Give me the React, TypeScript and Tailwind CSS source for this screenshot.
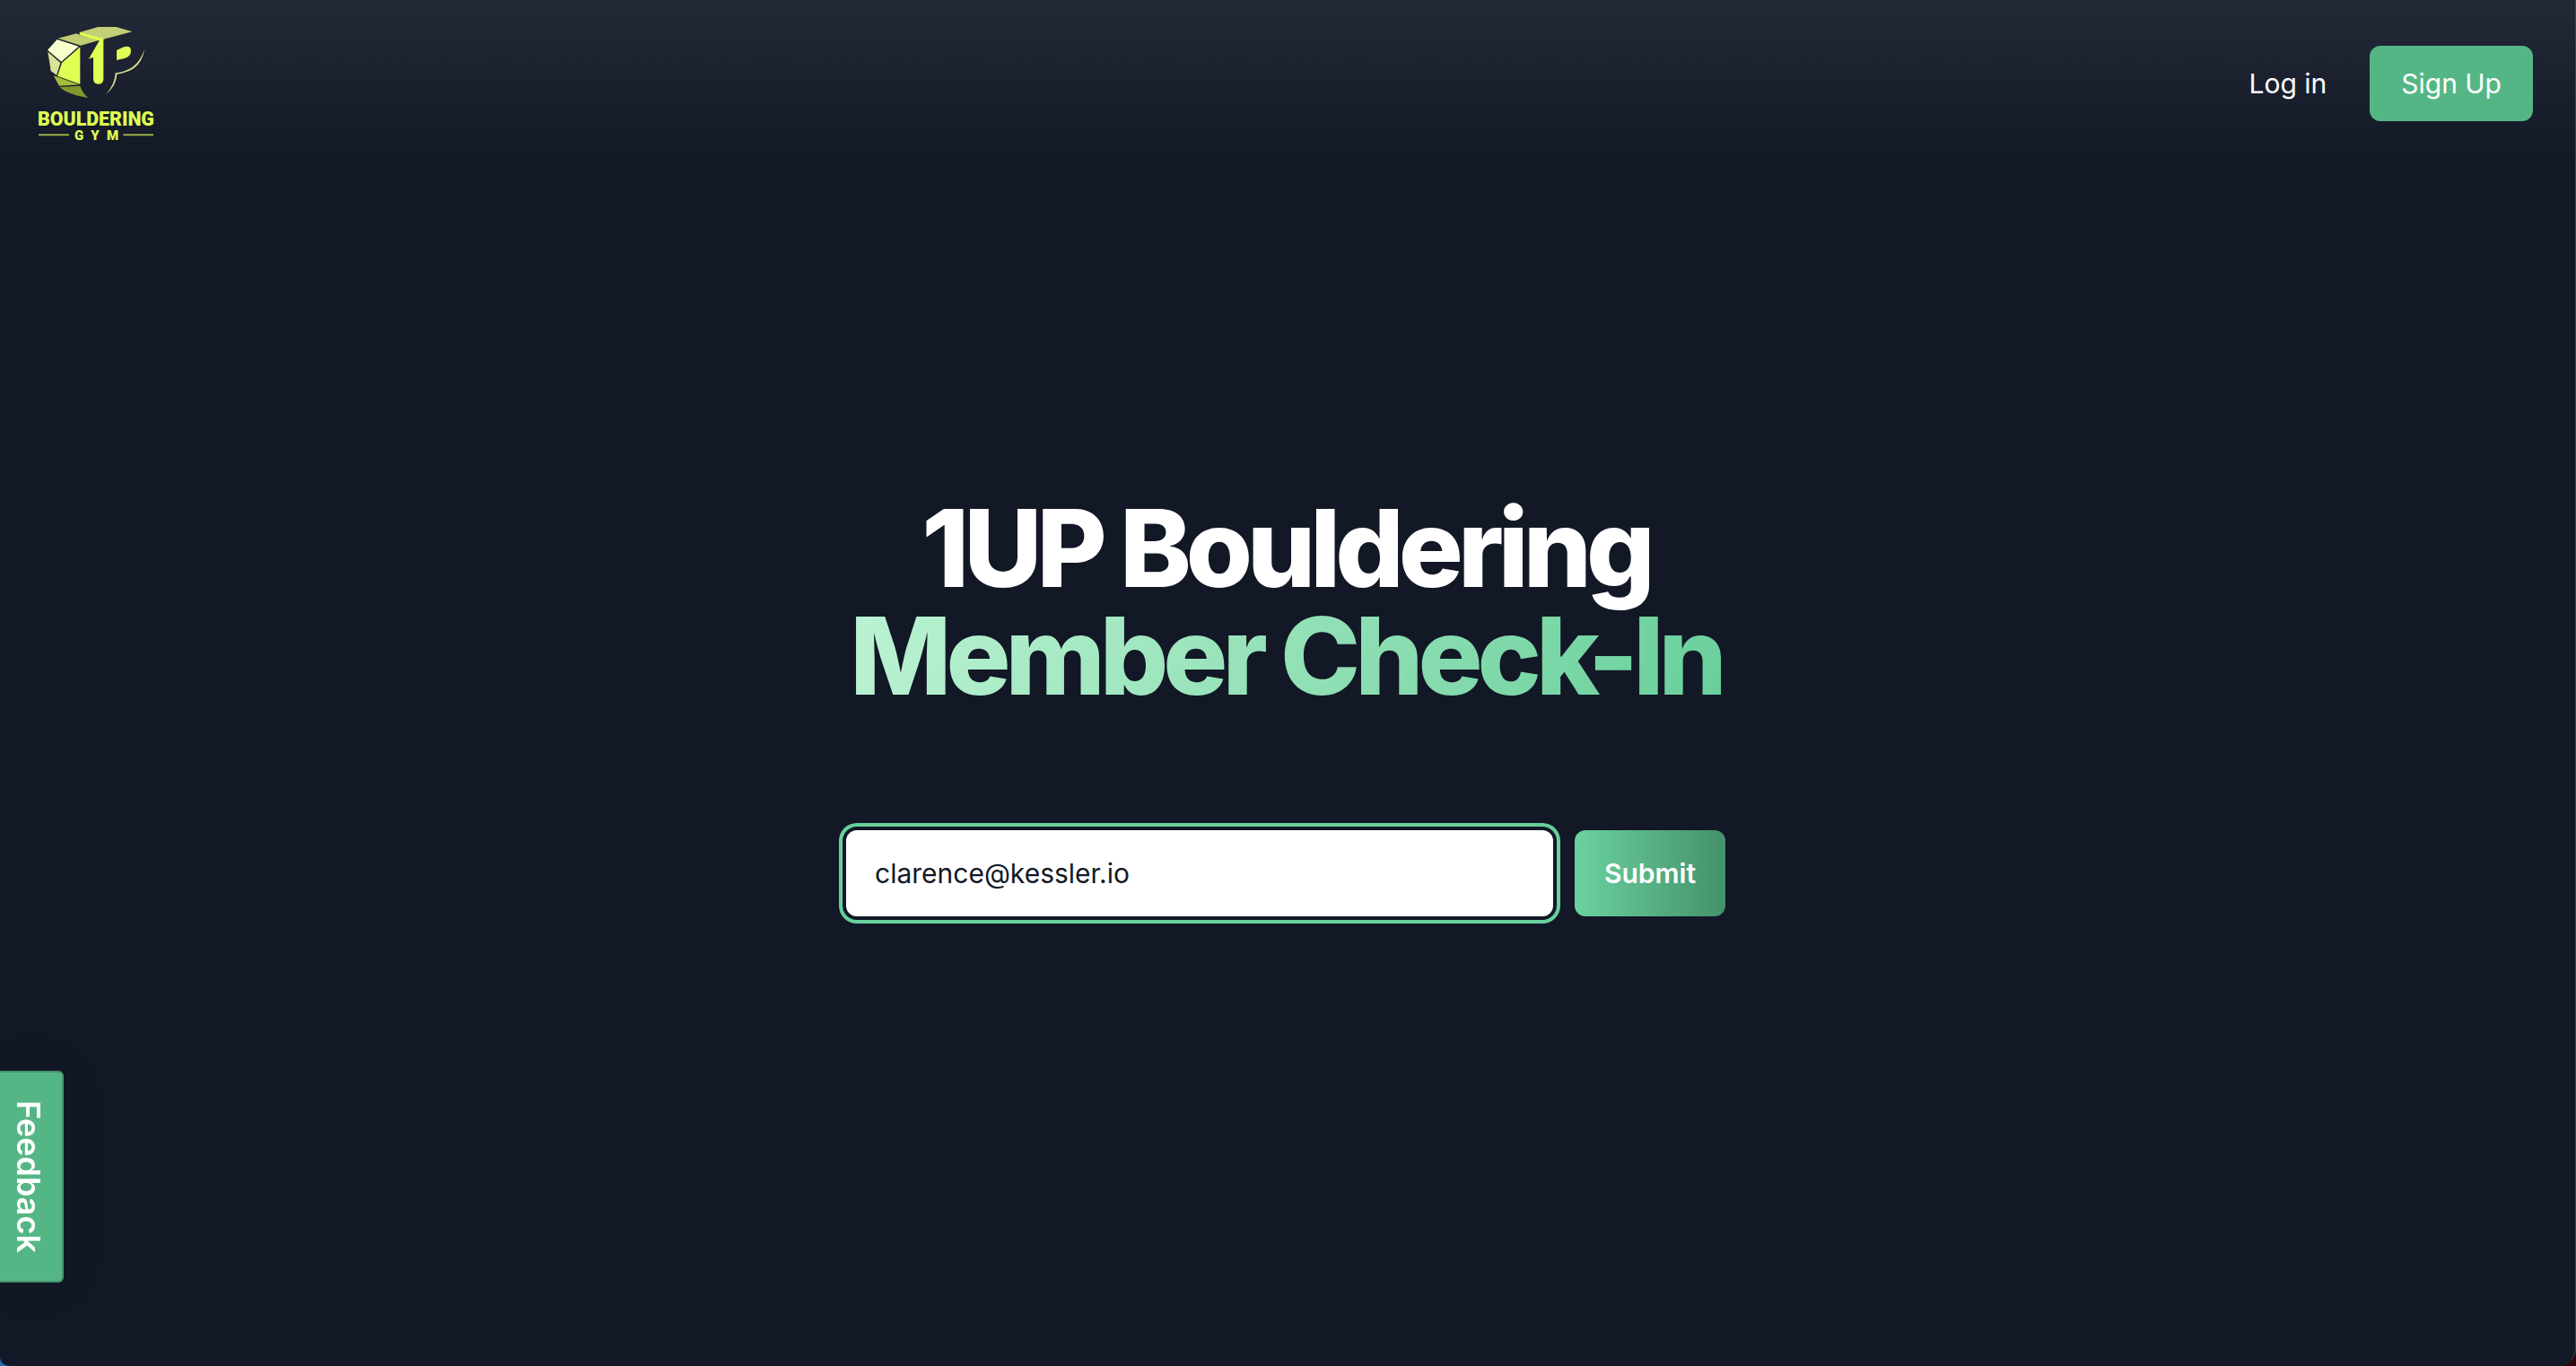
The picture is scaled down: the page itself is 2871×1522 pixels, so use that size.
import { useState } from "react";

function Logo() {
  return (
    <svg
      viewBox="69 57 384 384"
      className="size-32 overflow-visible"
      role="img"
      aria-label="1UP Bouldering Gym"
    >
      <path d="M134 98 L196 82 L208 88 L272 104 L210 122 Z" fill="#c0cd72" />
      <path d="M206 78 L268 60 H328 L382 76 L286 101 Z" fill="#c3cf77" />
      <path d="M206 77 L286 99 V104 L270 106 L206 87 Z" fill="#dfff52" />
      <path d="M131 102 L203 125 L145 176 L99 137 Z" fill="#f7ffcf" />
      <path d="M100 143 L142 180 L129 221 L110 207 Z" fill="#d8e394" />
      <path d="M208 127 V251 L132 224 L147 180 Z" fill="#dfff52" />
      <path d="M119 223 L205 253 L138 257 Z" fill="#a5bc3b" />
      <path d="M139 261 L208 257 Q216 282 235 297 Q185 289 154 272 Z" fill="#80982c" />
      <path
        d="M286 101 V234 Q286 251 269 251 Q252 251 252 234 V163 Q244 162 236 168 L272 106 Z"
        fill="#dfff52"
      />
      <path
        d="M330 138 L354 127 Q378 121 378 140 Q378 159 354 166 L330 171 Z"
        fill="#dfff52"
      />
      <path
        d="M423 134 Q418 175 387 199 Q363 214 331 218 Q329 257 294 285 Q323 254 326 214 Q360 209 383 194 Q411 173 423 134 Z"
        fill="#d2dd8f"
      />
      <g
        fill="#dfff52"
        fontFamily="Roboto, sans-serif"
        fontWeight="900"
        textAnchor="middle"
      >
        <text x="261" y="389" fontSize="64">BOULDERING</text>
        <text x="204" y="437" fontSize="45">G</text>
        <text x="258" y="437" fontSize="45">Y</text>
        <text x="317" y="437" fontSize="45">M</text>
      </g>
      <path d="M69 421 H171 M352 421 H453" stroke="#9aac45" strokeWidth="6" />
    </svg>
  );
}

export default function App() {
  const [email, setEmail] = useState("clarence@kessler.io");

  return (
    <div className="bg-linear-to-r from-[#1c6fb5] to-[#2a0508] font-['Inter',sans-serif] text-[30px] leading-[48px]">
      <div className="min-h-screen overflow-hidden rounded-br-[20px] rounded-bl-[10px] border-r border-[#3c4450] bg-[#121826]">
        <header className="flex h-[186px] items-center justify-between bg-linear-to-b from-[#232937] to-[#121826] pr-[47px] pl-[43px]">
          <a href="#home">
            <Logo />
          </a>
          <nav className="flex items-center gap-12">
            <a href="#login" className="text-white">
              Log in
            </a>
            <a
              href="#signup"
              className="rounded-xl bg-[#55b685] px-[35px] py-[18px] text-white"
            >
              Sign Up
            </a>
          </nav>
        </header>

        <main className="flex flex-col items-center pt-[365px] pr-1">
          <h1 className="text-center text-[120px] leading-none font-extrabold tracking-tighter text-white">
            1UP Bouldering
            <span className="block bg-linear-110 from-[#bbf3d3] to-[#68cf9b] bg-clip-text text-transparent">
              Member Check-In
            </span>
          </h1>
          <form
            className="mt-[134px] flex w-full max-w-[980px] gap-6"
            onSubmit={(e) => e.preventDefault()}
          >
            <input
              type="email"
              aria-label="Email address"
              value={email}
              onChange={(e) => setEmail(e.target.value)}
              className="h-24 min-w-0 flex-1 rounded-xl bg-white px-8 text-[#121826] ring-4 ring-[#68d09c] ring-offset-4 ring-offset-[#121826] outline-none"
            />
            <button
              type="submit"
              className="h-24 rounded-xl bg-linear-to-r from-[#6bd29f] to-[#44916b] px-[33px] font-semibold text-white"
            >
              Submit
            </button>
          </form>
        </main>
      </div>

      <button
        type="button"
        className="fixed top-[1193px] left-0 h-[236px] w-[71px] rounded-r-md border-2 border-l-0 border-[#46936c] bg-[#55b685] pr-1.5 text-center text-[36px] leading-10 font-semibold text-white shadow-[0_0_48px_rgba(0,0,0,0.1)] [writing-mode:vertical-rl]"
      >
        Feedback
      </button>
    </div>
  );
}
